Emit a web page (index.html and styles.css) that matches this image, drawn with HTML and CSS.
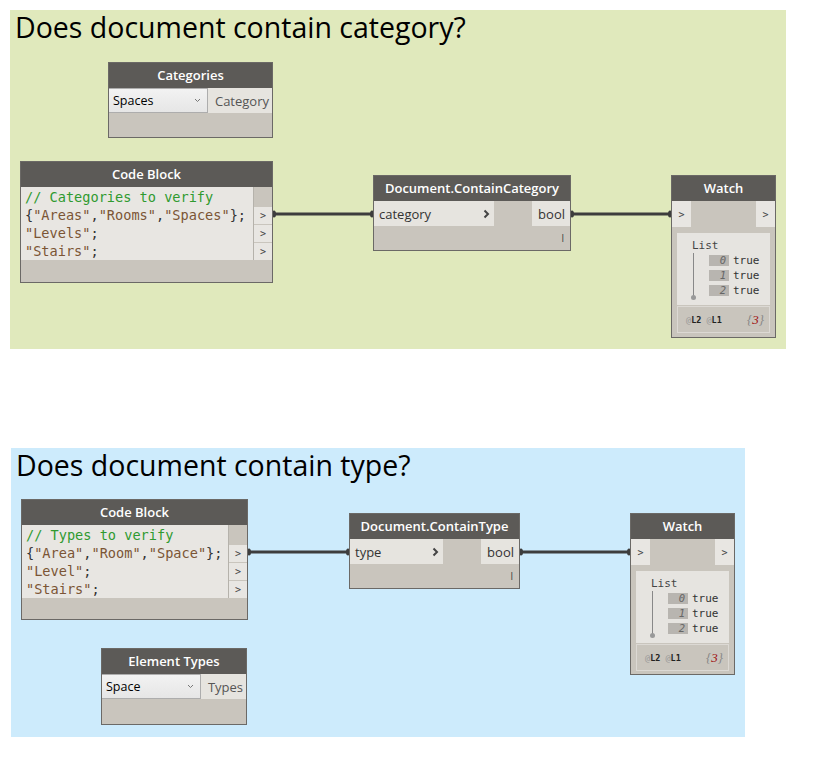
FILE: index.html
```html
<!DOCTYPE html>
<html>
<head>
<meta charset="utf-8">
<link rel="stylesheet" href="styles.css">
</head>
<body>
<div class="canvas">
  <section class="group group-green">
    <h1 class="group-title">Does document contain category?</h1>
    <svg class="wires" width="776" height="339">
      <line x1="263" y1="204" x2="363" y2="204"/>
      <line x1="561" y1="204" x2="661" y2="204"/>
      <ellipse cx="264" cy="204" rx="2" ry="3.5"/>
      <ellipse cx="362" cy="204" rx="2" ry="3.5"/>
      <ellipse cx="562" cy="204" rx="2" ry="3.5"/>
      <ellipse cx="660" cy="204" rx="2" ry="3.5"/>
    </svg>

    <div class="node n-categories">
      <div class="hdr">Categories</div>
      <div class="drop-row">
        <div class="dropdown"><span>Spaces</span><svg class="chev" width="7" height="5" viewBox="0 0 7 5"><path d="M1 1l2.5 2.5L6 1"/></svg></div>
        <div class="out-label">Category</div>
      </div>
    </div>

    <div class="node n-code1">
      <div class="hdr">Code Block</div>
      <div class="code-row">
        <div class="code">
          <div class="cl cm">// Categories to verify</div>
          <div class="cl"><span class="pn">{</span><span class="st">"Areas"</span><span class="pn">,</span><span class="st">"Rooms"</span><span class="pn">,</span><span class="st">"Spaces"</span><span class="pn">};</span></div>
          <div class="cl"><span class="st">"Levels"</span><span class="pn">;</span></div>
          <div class="cl"><span class="st">"Stairs"</span><span class="pn">;</span></div>
        </div>
        <div class="ports">
          <div class="port-blank"></div>
          <div class="port">&gt;</div>
          <div class="port">&gt;</div>
          <div class="port">&gt;</div>
        </div>
      </div>
    </div>

    <div class="node n-contain1">
      <div class="hdr">Document.ContainCategory</div>
      <div class="io-row">
        <div class="in-port w120"><span>category</span><svg class="arrow" width="7" height="10" viewBox="0 0 7 10"><path d="M1.5 1.5L5 5L1.5 8.5"/></svg></div>
        <div class="out-port">bool</div>
      </div>
      <div class="lace">l</div>
    </div>

    <div class="node n-watch1">
      <div class="hdr">Watch</div>
      <div class="watch-ports"><div class="wport">&gt;</div><div class="wport">&gt;</div></div>
      <div class="watch-panel">
        <div class="list-title">List</div>
        <div class="list-body">
          <div class="tree"><div class="tree-line"></div><div class="tree-dot"></div></div>
          <div class="items">
            <div class="item"><span class="idx">0</span><span class="val">true</span></div>
            <div class="item"><span class="idx">1</span><span class="val">true</span></div>
            <div class="item"><span class="idx">2</span><span class="val">true</span></div>
          </div>
        </div>
      </div>
      <div class="watch-foot"><span class="levels"><span class="at">@</span>L2 <span class="at">@</span>L1</span><span class="count">{<span class="num">3</span>}</span></div>
    </div>
  </section>

  <section class="group group-blue">
    <h1 class="group-title">Does document contain type?</h1>
    <svg class="wires" width="734" height="289">
      <line x1="237" y1="104" x2="338" y2="104"/>
      <line x1="509" y1="104" x2="619" y2="104"/>
      <ellipse cx="238" cy="104" rx="2" ry="3.5"/>
      <ellipse cx="337" cy="104" rx="2" ry="3.5"/>
      <ellipse cx="510" cy="104" rx="2" ry="3.5"/>
      <ellipse cx="618" cy="104" rx="2" ry="3.5"/>
    </svg>

    <div class="node n-code2">
      <div class="hdr">Code Block</div>
      <div class="code-row">
        <div class="code">
          <div class="cl cm">// Types to verify</div>
          <div class="cl"><span class="pn">{</span><span class="st">"Area"</span><span class="pn">,</span><span class="st">"Room"</span><span class="pn">,</span><span class="st">"Space"</span><span class="pn">};</span></div>
          <div class="cl"><span class="st">"Level"</span><span class="pn">;</span></div>
          <div class="cl"><span class="st">"Stairs"</span><span class="pn">;</span></div>
        </div>
        <div class="ports">
          <div class="port-blank"></div>
          <div class="port">&gt;</div>
          <div class="port">&gt;</div>
          <div class="port">&gt;</div>
        </div>
      </div>
    </div>

    <div class="node n-contain2">
      <div class="hdr">Document.ContainType</div>
      <div class="io-row">
        <div class="in-port w93"><span>type</span><svg class="arrow" width="7" height="10" viewBox="0 0 7 10"><path d="M1.5 1.5L5 5L1.5 8.5"/></svg></div>
        <div class="out-port">bool</div>
      </div>
      <div class="lace">l</div>
    </div>

    <div class="node n-watch2">
      <div class="hdr">Watch</div>
      <div class="watch-ports"><div class="wport">&gt;</div><div class="wport">&gt;</div></div>
      <div class="watch-panel">
        <div class="list-title">List</div>
        <div class="list-body">
          <div class="tree"><div class="tree-line"></div><div class="tree-dot"></div></div>
          <div class="items">
            <div class="item"><span class="idx">0</span><span class="val">true</span></div>
            <div class="item"><span class="idx">1</span><span class="val">true</span></div>
            <div class="item"><span class="idx">2</span><span class="val">true</span></div>
          </div>
        </div>
      </div>
      <div class="watch-foot"><span class="levels"><span class="at">@</span>L2 <span class="at">@</span>L1</span><span class="count">{<span class="num">3</span>}</span></div>
    </div>

    <div class="node n-types">
      <div class="hdr">Element Types</div>
      <div class="drop-row">
        <div class="dropdown dd-types"><span>Space</span><svg class="chev" width="7" height="5" viewBox="0 0 7 5"><path d="M1 1l2.5 2.5L6 1"/></svg></div>
        <div class="out-label">Types</div>
      </div>
    </div>
  </section>
</div>
</body>
</html>
```

FILE: styles.css
```css
html, body {
  margin: 0;
  padding: 0;
  background: #ffffff;
}

.canvas {
  position: relative;
  width: 836px;
  height: 768px;
  font-family: "Open Sans", "Noto Sans", sans-serif;
}

.group {
  position: relative;
}

.group-green {
  margin: 10px 0 0 10px;
  width: 776px;
  height: 339px;
  background: #e0e9bc;
}

.group-blue {
  margin: 99px 0 0 11px;
  width: 734px;
  height: 289px;
  background: #cdebfc;
}

.group-title {
  margin: 0;
  padding: 0 0 0 5px;
  font-family: "Open Sans", sans-serif;
  font-weight: 400;
  font-size: 28.5px;
  line-height: 34px;
  color: #000;
}

.wires {
  position: absolute;
  left: 0;
  top: 0;
  pointer-events: none;
}
.wires line {
  stroke: #3d3d3d;
  stroke-width: 3;
}
.wires ellipse {
  fill: #3d3d3d;
}

/* nodes */
.node {
  position: absolute;
  box-sizing: border-box;
  border: 1px solid #6b6966;
  background: #c9c5bd;
  display: flex;
  flex-direction: column;
}

.hdr {
  height: 25px;
  flex: none;
  background: #5c5a57;
  color: #ffffff;
  font-weight: 600;
  font-size: 13px;
  display: flex;
  align-items: center;
  justify-content: center;
  padding-bottom: 1px;
  box-sizing: border-box;
}

.n-categories { left: 98px; top: 52px; width: 165px; height: 76px; }
.n-code1 { left: 10px; top: 151px; width: 253px; height: 122px; }
.n-contain1 { left: 363px; top: 165px; width: 198px; height: 76px; }
.n-watch1 { left: 661px; top: 165px; width: 105px; height: 163px; }

.n-code2 { left: 10px; top: 51px; width: 227px; height: 121px; }
.n-contain2 { left: 338px; top: 65px; width: 171px; height: 76px; }
.n-watch2 { left: 619px; top: 65px; width: 105px; height: 162px; }
.n-types { left: 90px; top: 200px; width: 146px; height: 77px; }

/* dropdown nodes */
.drop-row {
  display: flex;
  height: 25px;
}
.dropdown {
  box-sizing: border-box;
  width: 99px;
  height: 25px;
  background: linear-gradient(#f2f2f2, #e6e6e6);
  border: 1px solid #adadad;
  border-left: none;
  display: flex;
  align-items: center;
  justify-content: space-between;
  padding: 0 6px 0 4px;
  font-size: 12.5px;
  color: #000;
}
.chev path {
  fill: none;
  stroke: #777;
  stroke-width: 1;
}
.out-label {
  flex: 1;
  background: #e6e4df;
  color: #555;
  font-size: 13px;
  display: flex;
  align-items: center;
  justify-content: flex-end;
  padding-right: 3px;
}

/* code block */
.code-row {
  display: flex;
}
.code {
  flex: 1;
  background: #e8e6e2;
  font-family: "DejaVu Sans Mono", "Liberation Mono", monospace;
  font-size: 13.6px;
  line-height: 18px;
  padding: 1px 0 0 4px;
}
.cl {
  white-space: pre;
  height: 18px;
}
.cm { color: #2f9a2f; }
.st { color: #7b5535; }
.pn { color: #333; }
.ports {
  width: 18px;
  flex: none;
  border-left: 1px solid #b5b2ab;
  display: flex;
  flex-direction: column;
}
.port-blank {
  height: 19px;
  background: #c9c5bd;
}
.port {
  height: 18px;
  box-sizing: border-box;
  background: #e8e6e2;
  border-top: 1px solid #c9c5bd;
  font-family: "DejaVu Sans Mono", monospace;
  font-size: 10px;
  color: #444;
  display: flex;
  align-items: center;
  justify-content: center;
}

/* contain nodes */
.io-row {
  display: flex;
  justify-content: space-between;
  height: 25px;
}
.in-port {
  background: #e6e4df;
  display: flex;
  align-items: center;
  justify-content: space-between;
  padding: 0 4px 0 5px;
  box-sizing: border-box;
  font-size: 13px;
  color: #333;
}
.w120 { width: 120px; }
.w93 { width: 93px; }
.arrow path {
  fill: none;
  stroke: #444;
  stroke-width: 2;
}
.out-port {
  background: #e6e4df;
  display: flex;
  align-items: center;
  padding: 0 5px 0 6px;
  font-size: 13px;
  color: #333;
}
.lace {
  flex: 1;
  display: flex;
  align-items: center;
  justify-content: flex-end;
  padding-right: 6px;
  font-size: 10px;
  color: #444;
}

/* watch */
.watch-ports {
  display: flex;
  justify-content: space-between;
  height: 26px;
  flex: none;
}
.wport {
  width: 19px;
  height: 26px;
  background: #e8e6e2;
  font-family: "DejaVu Sans Mono", monospace;
  font-size: 10px;
  color: #444;
  display: flex;
  align-items: center;
  justify-content: center;
}
.watch-panel {
  margin: 6px 5px 0 5px;
  background: #e6e4e0;
  height: 72px;
  box-sizing: border-box;
  padding: 7px 0 0 15px;
  font-family: "DejaVu Sans Mono", monospace;
  font-size: 11px;
  color: #444;
  flex: none;
}
.list-title {
  line-height: 12px;
}
.list-body {
  display: flex;
}
.tree {
  position: relative;
  width: 10px;
  height: 48px;
}
.tree-line {
  position: absolute;
  left: 1px;
  top: 1px;
  width: 1px;
  height: 44px;
  background: #888;
}
.tree-dot {
  position: absolute;
  left: -1px;
  top: 43px;
  width: 5px;
  height: 5px;
  border-radius: 50%;
  background: #999;
}
.items {
  padding: 3px 0 0 7px;
  display: flex;
  flex-direction: column;
  gap: 4px;
}
.item {
  display: flex;
  align-items: center;
  height: 11px;
}
.idx {
  width: 20px;
  height: 11px;
  background: #b8b5b0;
  color: #666;
  font-style: italic;
  font-size: 10.5px;
  line-height: 11px;
  text-align: right;
  padding-right: 3px;
  box-sizing: border-box;
}
.val {
  margin-left: 4px;
  color: #333;
  font-size: 11px;
}
.watch-foot {
  margin: 1px 5px 0 5px;
  height: 27px;
  box-sizing: border-box;
  border: 1px solid #dcd9d4;
  display: flex;
  align-items: center;
  justify-content: space-between;
  padding: 0 5px 0 8px;
  flex: none;
}
.levels {
  font-family: "DejaVu Sans Mono", monospace;
  font-size: 8.5px;
  font-weight: 700;
  color: #222;
}
.at {
  color: #999;
  font-weight: 400;
}
.count {
  font-family: "Liberation Serif", serif;
  font-style: italic;
  font-size: 13px;
  color: #888;
}
.num {
  color: #a01010;
}
```
